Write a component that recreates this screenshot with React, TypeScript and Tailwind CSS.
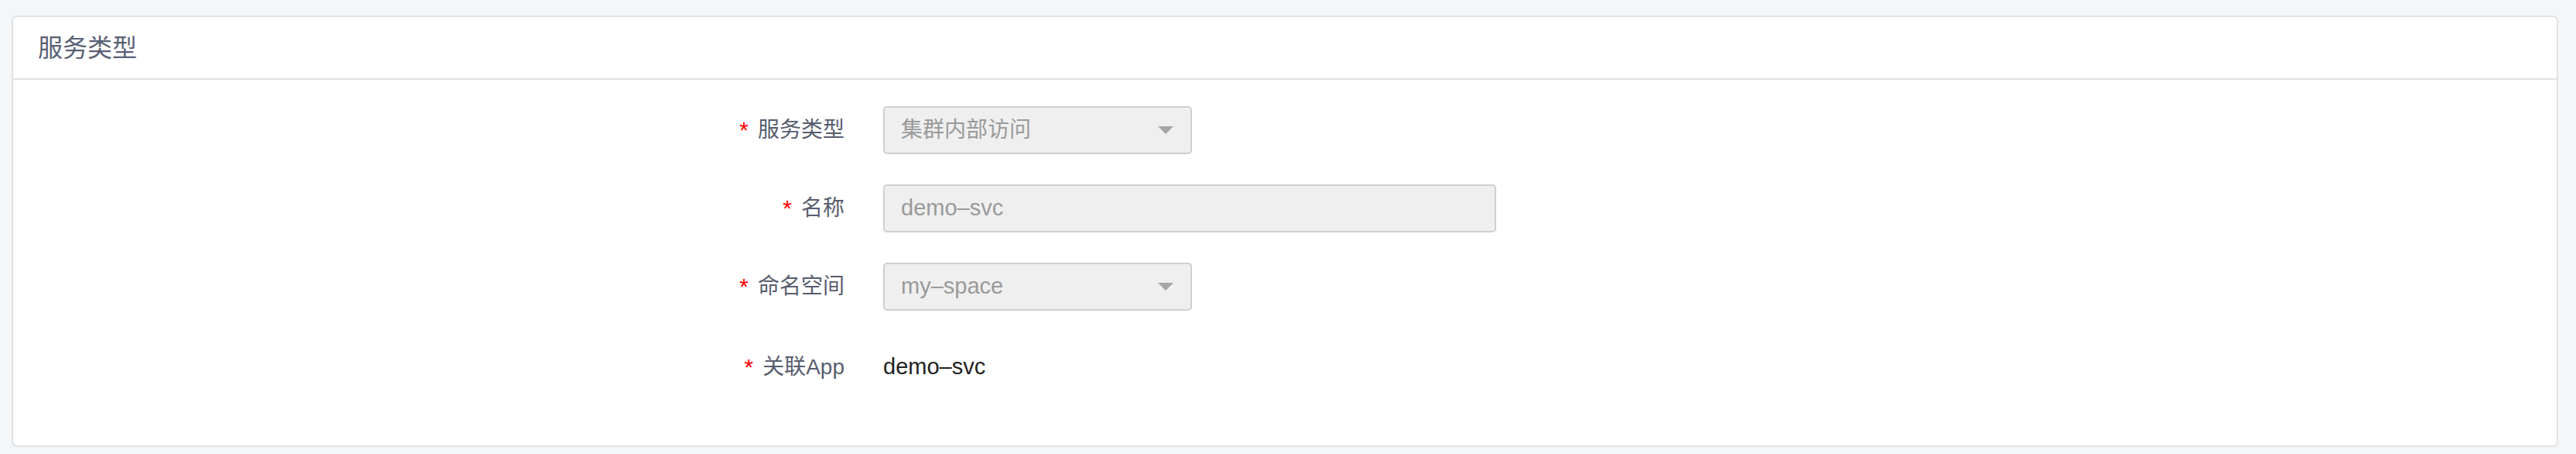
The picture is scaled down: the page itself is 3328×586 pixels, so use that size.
const font = { fontFamily: '"Liberation Sans", "Noto Sans CJK SC", sans-serif' };

const Label = ({ text }: { text: string }) => (
  <div className="w-[1124px] shrink-0 pr-[50px] flex justify-end items-center text-[28px] text-[#575d6f]">
    <span className="text-[#ff0000] mr-[12px] text-[30px] leading-none">*</span>
    <span>{text}</span>
  </div>
);

const Caret = () => (
  <svg width="20" height="10" viewBox="0 0 20 10" className="shrink-0">
    <path d="M0 0 L20 0 L10 10 Z" fill="#a5a5a5" />
  </svg>
);

export default function App() {
  return (
    <div className="min-h-[586px] bg-[#f4f7fa] pt-[20px] pl-[15px] pr-[23px] pb-[9px]" style={font}>
      <div className="bg-white border-2 border-[#e1e1e1] rounded-[7px] h-[557px] flex flex-col">
        {/* header */}
        <div className="h-[81px] border-b-2 border-[#e1e1e1] flex items-center pl-[32px]">
          <span className="text-[32px] text-[#596075]">服务类型</span>
        </div>

        {/* form */}
        <div className="flex flex-col gap-[39px] pt-[34px]">
          <div className="flex h-[62px]">
            <Label text="服务类型" />
            <div className="w-[399px] h-[62px] bg-[#efefef] border-2 border-[#cfcfcf] rounded-[5px] flex items-center justify-between pl-[21px] pr-[22px]">
              <span className="text-[28px] text-[#9a9a9a]">集群内部访问</span>
              <Caret />
            </div>
          </div>

          <div className="flex h-[62px]">
            <Label text="名称" />
            <div className="w-[792px] h-[62px] bg-[#efefef] border-2 border-[#cfcfcf] rounded-[5px] flex items-center pl-[21px]">
              <span className="text-[29px] text-[#9a9a9a]">demo–svc</span>
            </div>
          </div>

          <div className="flex h-[62px]">
            <Label text="命名空间" />
            <div className="w-[399px] h-[62px] bg-[#efefef] border-2 border-[#cfcfcf] rounded-[5px] flex items-center justify-between pl-[21px] pr-[22px]">
              <span className="text-[29px] text-[#9a9a9a]">my–space</span>
              <Caret />
            </div>
          </div>

          <div className="flex h-[62px] pt-[6px]">
            <Label text="关联App" />
            <div className="flex items-center">
              <span className="text-[29px] text-[#222222]">demo–svc</span>
            </div>
          </div>
        </div>
      </div>
    </div>
  );
}
